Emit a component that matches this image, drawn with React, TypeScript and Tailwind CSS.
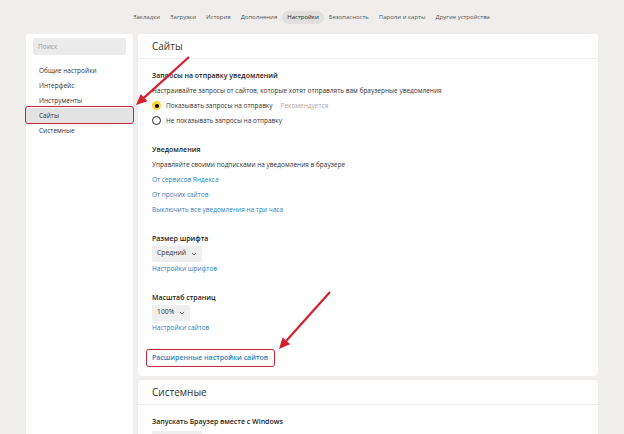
import React from "react";

const nav = [
  "Закладки",
  "Загрузки",
  "История",
  "Дополнения",
  "Настройки",
  "Безопасность",
  "Пароли и карты",
  "Другие устройства",
];

const menu = ["Общие настройки", "Интерфейс", "Инструменты", "Сайты", "Системные"];

function Title({ children }: any) {
  return <div className="h-[15px] text-[7px] leading-[15px] font-semibold text-[#222]">{children}</div>;
}

function Line({ children, className = "" }: any) {
  return <div className={"h-[15px] leading-[15px] " + className}>{children}</div>;
}

function Link({ children }: any) {
  return <Line className="text-[#2f7fc0]">{children}</Line>;
}

function Select({ children }: any) {
  return (
    <div className="flex h-[15px] items-center">
      <div className="flex h-[16px] items-center gap-[5px] rounded-[2px] bg-[#efefef] px-[5px] text-[6.8px] text-[#333]">
        {children}
        <svg width="6" height="4" viewBox="0 0 6 4">
          <path d="M1 1 L3 3 L5 1" fill="none" stroke="#555" strokeWidth="0.9" />
        </svg>
      </div>
    </div>
  );
}

function Radio({ on, children }: any) {
  return (
    <div className="flex h-[15px] items-center gap-[5px]">
      {on ? (
        <span className="flex h-[9px] w-[9px] items-center justify-center rounded-full bg-[#ffd633]">
          <span className="h-[4px] w-[4px] rounded-full bg-black" />
        </span>
      ) : (
        <span className="h-[9px] w-[9px] rounded-full border border-[#222] bg-white" />
      )}
      {children}
    </div>
  );
}

function Arrow({ x1, y1, x2, y2 }: any) {
  const a = Math.atan2(y2 - y1, x2 - x1);
  const l = 11;
  const w = 5;
  const bx = x2 - l * Math.cos(a);
  const by = y2 - l * Math.sin(a);
  const p1 = `${bx + w * Math.sin(a)},${by - w * Math.cos(a)}`;
  const p2 = `${bx - w * Math.sin(a)},${by + w * Math.cos(a)}`;
  return (
    <g>
      <line x1={x1} y1={y1} x2={bx} y2={by} stroke="#d4202c" strokeWidth="2.2" />
      <polygon points={`${x2},${y2} ${p1} ${p2}`} fill="#d4202c" />
    </g>
  );
}

export default function App() {
  return (
    <div
      className="relative h-[434px] w-[624px] overflow-hidden bg-[#efeeed] text-[6.5px] text-[#333]"
      style={{ fontFamily: '"Open Sans", "Noto Sans", sans-serif' }}
    >
      <div className="flex h-[34px] items-center pl-[128px] text-[6px] text-[#555]">
        {nav.map((n) => (
          <div
            key={n}
            className={
              "h-[13px] rounded-full px-[5px] leading-[13px] " +
              (n === "Настройки" ? "bg-[#e0dfdd] text-[#222]" : "")
            }
          >
            {n}
          </div>
        ))}
      </div>

      <div className="flex gap-[5px] pl-[26px]">
        <div className="h-[420px] w-[107px] rounded-[4px] bg-white pt-[4px]">
          <div className="mx-[7px] h-[17px] rounded-[2px] bg-[#ebebeb] pl-[5px] leading-[17px] text-[#999]">
            Поиск
          </div>
          <div className="mt-[8px]">
            {menu.map((m) => (
              <div
                key={m}
                className={
                  "h-[15px] pl-[13px] leading-[15px] " +
                  (m === "Сайты" ? "bg-[#e3e3e3]" : "")
                }
              >
                {m}
              </div>
            ))}
          </div>
        </div>

        <div className="flex w-[460px] flex-col gap-[4px]">
          <div className="h-[342px] rounded-[4px] bg-white">
            <div className="h-[25px] border-b border-[#efefef] pl-[14px] text-[10px] leading-[25px] text-[#333]">
              Сайты
            </div>
            <div className="pl-[14px] pt-[9px]">
              <Title>Запросы на отправку уведомлений</Title>
              <Line>Настраивайте запросы от сайтов, которые хотят отправлять вам браузерные уведомления</Line>
              <Radio on>
                <span>Показывать запросы на отправку</span>
                <span className="ml-[3px] text-[#aaa]">Рекомендуется</span>
              </Radio>
              <Radio>
                <span>Не показывать запросы на отправку</span>
              </Radio>

              <div className="mt-[14px]">
                <Title>Уведомления</Title>
                <Line>Управляйте своими подписками на уведомления в браузере</Line>
                <Link>От сервисов Яндекса</Link>
                <Link>От прочих сайтов</Link>
                <Link>Выключить все уведомления на три часа</Link>
              </div>

              <div className="mt-[14px]">
                <Title>Размер шрифта</Title>
                <Select>Средний</Select>
                <Link>Настройки шрифтов</Link>
              </div>

              <div className="mt-[14px]">
                <Title>Масштаб страниц</Title>
                <Select>100%</Select>
                <Link>Настройки сайтов</Link>
              </div>

              <div className="mt-[15px] text-[7px] font-semibold">
                <Link>Расширенные настройки сайтов</Link>
              </div>
            </div>
          </div>

          <div className="h-[80px] rounded-[4px] bg-white">
            <div className="h-[25px] border-b border-[#efefef] pl-[14px] text-[10px] leading-[25px] text-[#333]">
              Системные
            </div>
            <div className="pl-[14px] pt-[9px]">
              <Title>Запускать Браузер вместе с Windows</Title>
              <div className="mt-[2px] h-[16px] w-[50px] rounded-[2px] bg-[#efefef]" />
            </div>
          </div>
        </div>
      </div>

      <div className="absolute left-[25px] top-[106px] h-[18px] w-[109px] rounded-[3px] border-[1.5px] border-[#c4283a]" />
      <div className="absolute left-[146px] top-[349px] h-[18px] w-[129px] rounded-[3px] border-[1.5px] border-[#c4283a]" />

      <svg className="pointer-events-none absolute left-0 top-0" width="624" height="434">
        <Arrow x1={189} y1={57} x2={136} y2={105} />
        <Arrow x1={330} y1={292} x2={279} y2={349} />
      </svg>
    </div>
  );
}
